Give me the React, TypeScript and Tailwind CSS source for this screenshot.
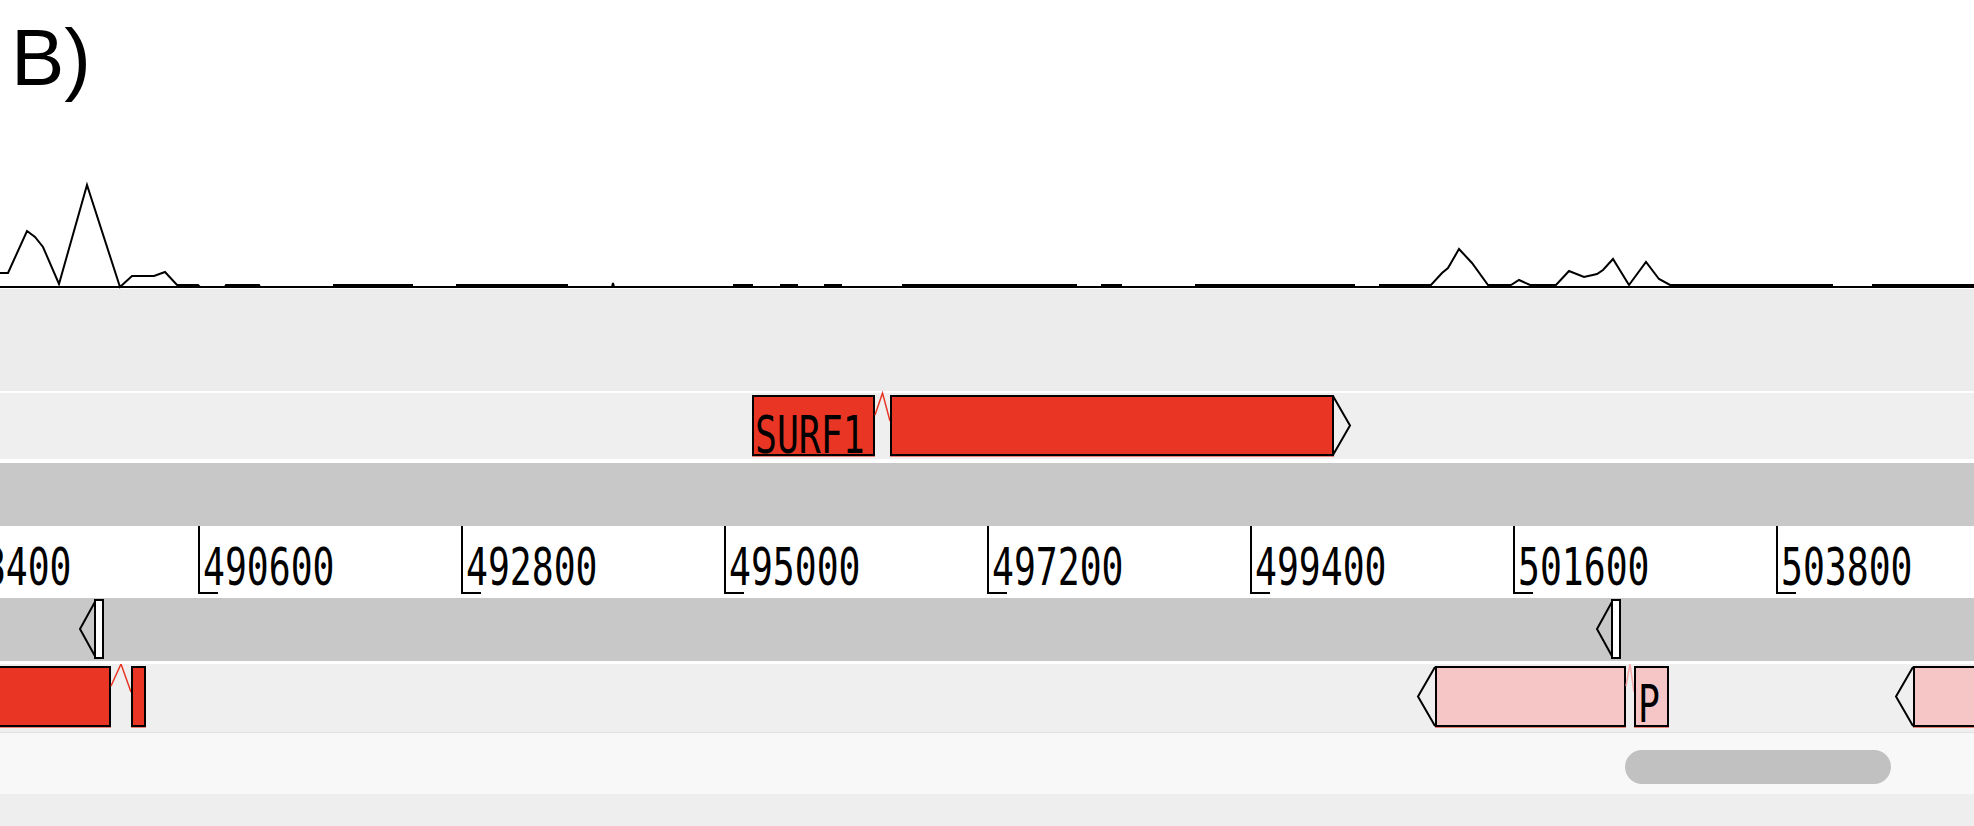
import React from 'react'

const MONO = "font-['DejaVu_Sans_Mono','Liberation_Mono',monospace] text-[52px] leading-none scale-x-70 origin-left whitespace-nowrap text-black"
const BOX_LABEL = "font-['DejaVu_Sans_Mono','Liberation_Mono',monospace] text-[52px] leading-[36px] scale-x-70 origin-left whitespace-nowrap text-black"

const RED = '#e93524'
const PINK = '#f6c6c6'

// coverage trace, in page pixels
const trace: [number, number][] = [
  [0, 273], [8, 273], [27, 231], [35, 237], [43, 247], [59, 284], [87, 185], [120, 287],
  [132, 276], [154, 276], [165, 272], [177, 285], [198, 285], [200, 287], [225, 287],
  [226, 285], [259, 285], [260, 287], [334, 287], [334, 285], [412, 285], [412, 287],
  [457, 287], [457, 285], [567, 285], [567, 287], [612, 287], [613, 283], [614, 287],
  [734, 287], [734, 285], [752, 285], [752, 287], [781, 287], [781, 285], [797, 285],
  [797, 287], [825, 287], [825, 285], [841, 285], [841, 287], [903, 287], [903, 285],
  [1076, 285], [1076, 287], [1102, 287], [1102, 285], [1121, 285], [1121, 287],
  [1196, 287], [1196, 285], [1354, 285], [1354, 287], [1380, 287], [1380, 285],
  [1431, 285], [1442, 273], [1448, 268], [1459, 249], [1472, 263], [1488, 285],
  [1511, 285], [1519, 280], [1530, 285], [1556, 285], [1569, 271], [1584, 277],
  [1597, 274], [1603, 270], [1613, 259], [1629, 285], [1646, 262], [1659, 279],
  [1670, 285], [1832, 285], [1832, 287], [1873, 287], [1873, 285], [1974, 285],
]

const ticks = Array.from({ length: 8 }, (_, i) => String(488400 + i * 2200))

function Coverage() {
  return (
    <div className="relative h-[289px] bg-white shrink-0">
      <div className="pl-[11px] pt-[18px] font-['Liberation_Sans',Arial,sans-serif] text-[80px] leading-none text-black">
        B)
      </div>
      <svg className="absolute inset-0" width={1974} height={289} viewBox="0 0 1974 289">
        <line x1={0} y1={287} x2={1974} y2={287} stroke="#000" strokeWidth={2} />
        <polyline
          points={trace.map((p) => p.join(',')).join(' ')}
          fill="none"
          stroke="#000"
          strokeWidth={2}
        />
      </svg>
    </div>
  )
}

function Box({ width, fill, label, pt = 20, pl = 1 }: { width: number; fill: string; label?: string; pt?: number; pl?: number }) {
  return (
    <div
      className="h-[61px] shrink-0 border-2 border-black shadow-[0_1px_0_rgba(233,53,36,0.6)]"
      style={{ width, background: fill, paddingTop: pt, paddingLeft: pl }}
    >
      {label && <div className={`${label.length === 1 ? 'tracking-[-2px]' : ''} ${BOX_LABEL}`}>{label}</div>}
    </div>
  )
}

function Intron({ width, color }: { width: number; color: string }) {
  return (
    <svg className="shrink-0 self-start -mt-[4px] overflow-visible" width={width} height={40}>
      <polyline points={`0,24 ${width / 2},2 ${width},30`} fill="none" stroke={color} strokeWidth={1.5} />
    </svg>
  )
}

function Head({ dir }: { dir: 'l' | 'r' }) {
  const pts = dir === 'r' ? '0,1 17,30.5 0,60' : '19,1 2,30.5 19,60'
  return (
    <svg className={`shrink-0 ${dir === 'r' ? '-ml-[1px]' : '-mr-[1px]'}`} width={20} height={61}>
      <polyline points={pts} fill="none" stroke="#000" strokeWidth={2} />
    </svg>
  )
}

function Stub({ left }: { left: number }) {
  return (
    <svg className="absolute top-[1px]" style={{ left }} width={28} height={62}>
      <polyline points="18,1 2,30 18,59" fill="none" stroke="#000" strokeWidth={2} />
      <rect x={17} y={1} width={8} height={58} fill="#fff" stroke="#000" strokeWidth={2} />
    </svg>
  )
}

function Feature({ left, children }: { left: number; children: React.ReactNode }) {
  return (
    <div className="absolute top-[2px] flex items-start" style={{ left }}>
      {children}
    </div>
  )
}

export default function App() {
  return (
    <div className="w-[1974px] h-[826px] overflow-hidden bg-[#eeeeee] flex flex-col">
      <Coverage />

      <div className="h-[102px] bg-[#ececec] shrink-0" />
      <div className="h-[2px] bg-white shrink-0" />

      {/* SURF1 track */}
      <div className="relative h-[66px] bg-[#efefef] shrink-0">
        <Feature left={752}>
          <Box width={123} fill={RED} label="SURF1" />
          <Intron width={15} color={RED} />
          <Box width={444} fill={RED} />
          <Head dir="r" />
        </Feature>
      </div>
      <div className="h-[4px] bg-white shrink-0" />

      <div className="h-[63px] bg-[#c8c8c8] shrink-0" />

      {/* coordinate ruler */}
      <div className="h-[72px] bg-white shrink-0 overflow-hidden flex -ml-[65px]">
        {ticks.map((t) => (
          <div key={t} className="w-[263px] shrink-0 flex items-start">
            <div className="h-[68px] w-[20px] shrink-0 border-l-2 border-b-2 border-black" />
            <div className={`-ml-[15px] mt-[15px] ${MONO}`}>{t}</div>
          </div>
        ))}
      </div>

      <div className="relative h-[63px] bg-[#c8c8c8] shrink-0">
        <Stub left={78} />
        <Stub left={1595} />
      </div>
      <div className="h-[3px] bg-white shrink-0" />

      {/* gene track */}
      <div className="relative h-[68px] bg-[#efefef] shrink-0 overflow-hidden">
        <Feature left={-4}>
          <Box width={115} fill={RED} />
          <Intron width={20} color={RED} />
          <Box width={15} fill={RED} />
        </Feature>
        <Feature left={1416}>
          <Head dir="l" />
          <Box width={191} fill={PINK} />
          <Intron width={8} color="#f4a8a8" />
          <Box width={35} fill={PINK} label="P" pt={18} pl={2} />
        </Feature>
        <Feature left={1894}>
          <Head dir="l" />
          <Box width={90} fill={PINK} />
        </Feature>
      </div>

      {/* scrollbar */}
      <div className="h-[62px] bg-[#f8f8f8] border-t border-[#e2e2e2] shrink-0 pl-[1625px] pt-[17px]">
        <div className="w-[266px] h-[34px] rounded-full bg-[#c1c1c1]" />
      </div>
      <div className="flex-1 bg-[#eeeeee]" />
    </div>
  )
}
